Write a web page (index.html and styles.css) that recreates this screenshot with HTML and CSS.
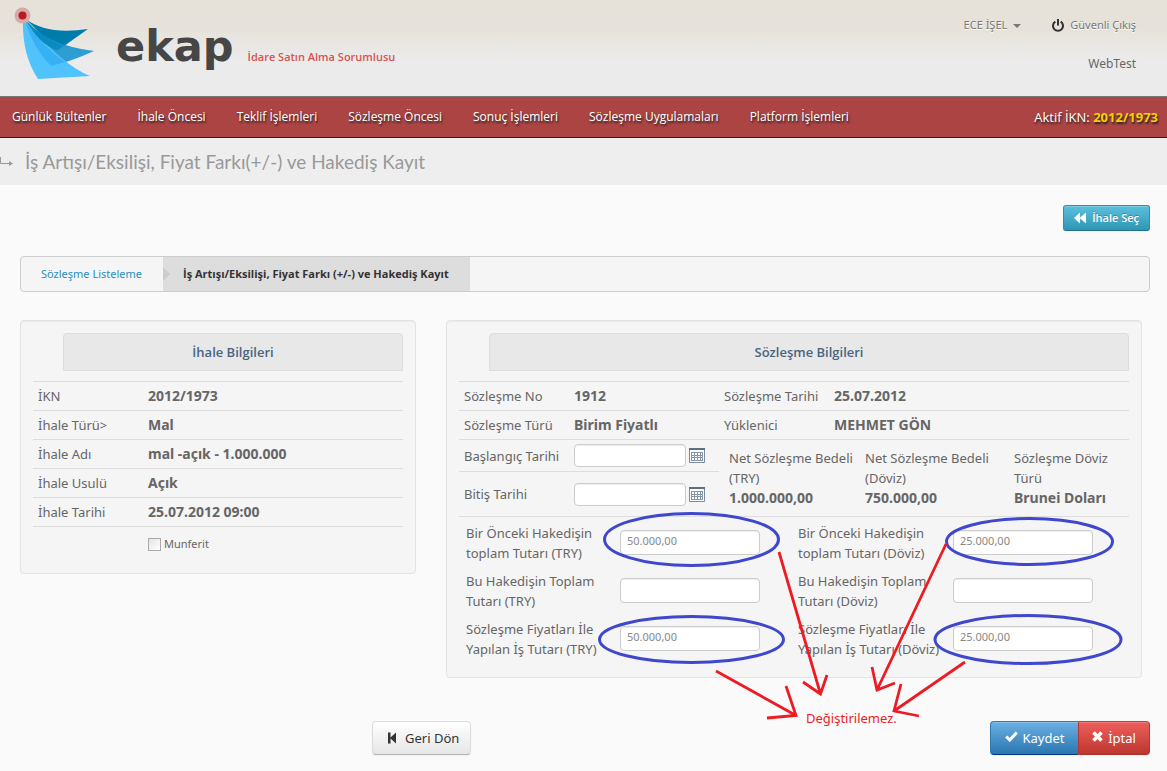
FILE: index.html
```html
<!DOCTYPE html>
<html lang="tr">
<head>
<meta charset="utf-8">
<meta name="viewport" content="width=device-width, initial-scale=1">
<title>EKAP - Hakediş Kayıt</title>
<link rel="stylesheet" href="styles.css">
</head>
<body>
<header class="header">
  <div class="brand">
    <svg class="brand-mark" width="84" height="76" viewBox="12 6 84 76" aria-hidden="true">
      <path d="M26 19Q46 35 88 29L57 51Z" fill="#007caa"/>
      <path d="M25 20Q46 45 94 51Q72 61 52 66Z" fill="#1292d0" opacity=".88"/>
      <path d="M23 20Q22 55 38 79L90 76Q62 65 26 21Z" fill="#50c2fc"/>
      <path d="M25 21Q33 48 51 66L65 62Q43 47 25 21Z" fill="#35b1f4"/>
      <path d="M26 20Q38 43 56 50L62 46Q41 37 26 20Z" fill="#098bc1"/>
      <circle cx="22.500" cy="15.500" r="8" fill="#d9a8a8"/>
      <circle cx="22.500" cy="15.500" r="4" fill="#b81c22"/>
    </svg>
    <span class="brand-name">ekap</span>
    <span class="brand-role">İdare Satın Alma Sorumlusu</span>
  </div>
  <div class="account">
    <div class="account-links">
      <a href="#" class="account-user">ECE İŞEL<span class="caret"></span></a>
      <a href="#" class="account-exit">
        <svg width="12" height="13" viewBox="0 0 12 13" aria-hidden="true"><path d="M3.300 2.600A5 5 0 1 0 8.700 2.600" fill="none" stroke="#333" stroke-width="2"/><path d="M6 0V6.500" stroke="#333" stroke-width="2"/></svg>
        Güvenli Çıkış</a>
    </div>
    <span class="account-env">WebTest</span>
  </div>
</header>
<nav class="nav">
  <ul class="nav-list">
    <li><a href="#">Günlük Bültenler</a></li>
    <li><a href="#">İhale Öncesi</a></li>
    <li><a href="#">Teklif İşlemleri</a></li>
    <li><a href="#">Sözleşme Öncesi</a></li>
    <li><a href="#">Sonuç İşlemleri</a></li>
    <li><a href="#">Sözleşme Uygulamaları</a></li>
    <li><a href="#">Platform İşlemleri</a></li>
  </ul>
  <p class="nav-ikn">Aktif İKN: <strong>2012/1973</strong></p>
</nav>
<div class="page-title">
  <svg width="14" height="10" viewBox="0 0 14 10" aria-hidden="true"><path d="M0.500 0V6.500H11" fill="none" stroke="#999"/><path d="M9 4L13 6.500L9 9Z" fill="#999"/></svg>
  <h1>İş Artışı/Eksilişi, Fiyat Farkı(+/-) ve Hakediş Kayıt</h1>
</div>
<main class="main">
  <div class="toolbar">
    <button type="button" class="btn btn-info">
      <svg width="12" height="12" viewBox="0 0 12 12" aria-hidden="true"><path d="M6 0.500V11.500L0 6ZM12 0.500V11.500L5.500 6Z" fill="#fff"/></svg>
      İhale Seç</button>
  </div>
  <ol class="steps">
    <li><a href="#">Sözleşme Listeleme</a></li>
    <li class="current">İş Artışı/Eksilişi, Fiyat Farkı (+/-) ve Hakediş Kayıt</li>
  </ol>
  <form>
    <div class="panels">
      <section class="panel">
        <h2 class="panel-title">İhale Bilgileri</h2>
        <table class="facts">
          <tr><th scope="row">İKN</th><td>2012/1973</td></tr>
          <tr><th scope="row">İhale Türü&gt;</th><td>Mal</td></tr>
          <tr><th scope="row">İhale Adı</th><td>mal -açık - 1.000.000</td></tr>
          <tr><th scope="row">İhale Usulü</th><td>Açık</td></tr>
          <tr><th scope="row">İhale Tarihi</th><td>25.07.2012 09:00</td></tr>
        </table>
        <label class="check"><input type="checkbox"> Munferit</label>
      </section>
      <section class="panel panel-contract">
        <h2 class="panel-title">Sözleşme Bilgileri</h2>
        <table class="facts facts-wide">
          <tr><th scope="row">Sözleşme No</th><td class="mid">1912</td><th scope="row">Sözleşme Tarihi</th><td>25.07.2012</td></tr>
          <tr><th scope="row">Sözleşme Türü</th><td class="mid">Birim Fiyatlı</td><th scope="row">Yüklenici</th><td>MEHMET GÖN</td></tr>
        </table>
        <div class="period">
          <div class="dates">
            <div class="date-row">
              <label for="start">Başlangıç Tarihi</label>
              <input type="text" id="start">
              <button type="button" class="cal" aria-label="Başlangıç tarihi seç"><svg width="16" height="15" viewBox="0 0 16 15"><path d="M.5.500H15.500V14.500H.5Z" fill="#fff" stroke="#7b8b99"/><path d="M0 0H16V2H0Z" fill="#5c7084"/><path d="M2 4H14V13H2Z" fill="#8496a8"/><path d="M3 5h2v2H3zM6 5h2v2H6zM9 5h2v2H9zM12 5h1v2h-1zM3 8h2v1H3zM6 8h2v1H6zM9 8h2v1H9zM12 8h1v1h-1zM3 10h2v2H3zM6 10h2v2H6zM9 10h2v2H9zM12 10h1v2h-1z" fill="#fff"/></svg></button>
            </div>
            <div class="date-row">
              <label for="end">Bitiş Tarihi</label>
              <input type="text" id="end">
              <button type="button" class="cal" aria-label="Bitiş tarihi seç"><svg width="16" height="15" viewBox="0 0 16 15"><path d="M.5.500H15.500V14.500H.5Z" fill="#fff" stroke="#7b8b99"/><path d="M0 0H16V2H0Z" fill="#5c7084"/><path d="M2 4H14V13H2Z" fill="#8496a8"/><path d="M3 5h2v2H3zM6 5h2v2H6zM9 5h2v2H9zM12 5h1v2h-1zM3 8h2v1H3zM6 8h2v1H6zM9 8h2v1H9zM12 8h1v1h-1zM3 10h2v2H3zM6 10h2v2H6zM9 10h2v2H9zM12 10h1v2h-1z" fill="#fff"/></svg></button>
            </div>
          </div>
          <dl class="prices">
            <div><dt>Net Sözleşme Bedeli<br>(TRY)</dt><dd>1.000.000,00</dd></div>
            <div><dt>Net Sözleşme Bedeli<br>(Döviz)</dt><dd>750.000,00</dd></div>
            <div><dt>Sözleşme Döviz<br>Türü</dt><dd>Brunei Doları</dd></div>
          </dl>
        </div>
        <div class="amounts">
          <label for="a1">Bir Önceki Hakedişin<br>toplam Tutarı (TRY)</label><input type="text" id="a1" value="50.000,00" readonly>
          <label for="b1">Bir Önceki Hakedişin<br>toplam Tutarı (Döviz)</label><input type="text" id="b1" value="25.000,00" readonly>
          <label for="a2">Bu Hakedişin Toplam<br>Tutarı (TRY)</label><input type="text" id="a2">
          <label for="b2">Bu Hakedişin Toplam<br>Tutarı (Döviz)</label><input type="text" id="b2">
          <label for="a3">Sözleşme Fiyatları İle<br>Yapılan İş Tutarı (TRY)</label><input type="text" id="a3" value="50.000,00" readonly>
          <label for="b3">Sözleşme Fiyatları İle<br>Yapılan İş Tutarı (Döviz)</label><input type="text" id="b3" value="25.000,00" readonly>
        </div>
        <svg class="notes" width="696" height="410" viewBox="446 320 696 410">
          <g fill="none" stroke="#3f48cc" stroke-width="3">
            <ellipse cx="691.500" cy="539.500" rx="87" ry="26"/>
            <ellipse cx="691.500" cy="639.500" rx="92" ry="23"/>
            <ellipse cx="1029.500" cy="541.500" rx="83" ry="23"/>
            <ellipse cx="1028" cy="639.500" rx="93" ry="24"/>
          </g>
          <g fill="none" stroke="#ed1c24" stroke-width="2.800">
            <path d="M779 552L820.500 694M803 682L820.500 694L827 675"/>
            <path d="M946 544L877 690M872 667L877 690L895 683"/>
            <path d="M716 671L796 715.500M786 686L796 715.500L767 718"/>
            <path d="M965 662L894 711M901 684L894 711L919 716"/>
          </g>
          <text class="notes-text" x="806" y="723">Değiştirilemez.</text>
        </svg>
      </section>
    </div>
    <div class="actions">
      <button type="button" class="btn btn-back">
        <svg width="9" height="12" viewBox="0 0 9 12" aria-hidden="true"><path d="M0 0.500H2.500V5.500L8 0.500V11.500L2.500 6.500V11.500H0Z" fill="#333"/></svg>
        Geri Dön</button>
      <div class="btn-group">
        <button type="submit" class="btn btn-save">
          <svg width="13" height="11" viewBox="0 0 13 11" aria-hidden="true"><path d="M1.200 5.500L4.800 9L11.800 1.500" fill="none" stroke="#fff" stroke-width="3"/></svg>
          Kaydet</button>
        <button type="button" class="btn btn-cancel">
          <svg width="11" height="11" viewBox="0 0 11 11" aria-hidden="true"><path d="M1.500 1.500L9.500 9.500M9.500 1.500L1.500 9.500" stroke="#fff" stroke-width="3.600"/></svg>
          İptal</button>
      </div>
    </div>
  </form>
</main>
</body>
</html>
```
FILE: styles.css
```css
* { box-sizing: border-box; }
body {
  margin: 0;
  background: #fafafa;
  color: #666;
  font: 13px/20px "Noto Sans", "Open Sans", sans-serif;
}
h1, h2, p, ul, ol, dl, dd { margin: 0; padding: 0; }
ul, ol { list-style: none; }
a { color: inherit; text-decoration: none; }
input, button { font: inherit; color: inherit; }

.header {
  display: flex;
  justify-content: space-between;
  height: 96px;
  background: linear-gradient(#e6e1d9 0, #e6e1d9 26px, #ebebeb 60px);
}
.brand { display: flex; align-items: flex-start; padding: 6px 0 0 12px; }
.brand-name {
  margin-left: 20px;
  color: #464646;
  font: bold 43px/80px "DejaVu Sans", sans-serif;
}
.brand-role {
  margin: 41px 0 0 14px;
  color: #d9534f;
  font-family: "Open Sans", sans-serif;
  font-size: 11px;
  font-weight: 600;
}
.account {
  display: flex;
  flex-direction: column;
  align-items: flex-end;
  gap: 19px;
  padding: 15px 31px 0 0;
  font-size: 12px;
}
.account-links { display: flex; gap: 31px; color: #777; font-size: 11px; text-shadow: 0 1px 0 #fff; }
.account-exit { display: flex; align-items: center; gap: 6px; }
.caret {
  display: inline-block;
  margin-left: 6px;
  border: 4px solid transparent;
  border-top-color: #777;
  border-bottom: 0;
  vertical-align: middle;
}

.nav {
  display: flex;
  justify-content: space-between;
  align-items: center;
  height: 42px;
  padding: 0 9px 0 12px;
  border-top: 1px solid #777;
  border-bottom: 1px solid #222;
  background: #ac4444;
  color: #fff;
  font-family: "Open Sans", sans-serif;
  text-shadow: 1px 2px 2px #222;
  white-space: nowrap;
}
.nav-list { display: flex; gap: 31px; font-size: 12px; }
.nav-ikn strong { color: #f5d000; }

.page-title {
  display: flex;
  align-items: center;
  gap: 11px;
  height: 47px;
  background: #eee;
  color: #999;
}
.page-title h1 { font: 19px/30px Lato, "Noto Sans", sans-serif; }

.main { padding: 20px 17px 16px 20px; }
.toolbar { display: flex; justify-content: flex-end; }
.btn {
  display: inline-flex;
  align-items: center;
  justify-content: center;
  gap: 8px;
  border: 1px solid;
  border-radius: 4px;
  cursor: pointer;
  box-shadow: inset 0 1px 0 rgba(255, 255, 255, .2), 0 1px 2px rgba(0, 0, 0, .05);
}
.btn-info {
  gap: 6px;
  height: 26px;
  padding: 0 10px;
  border-color: #2f8fae #2f8fae #24708a;
  border-radius: 3px;
  background: linear-gradient(#5bc0de, #2f96b4);
  color: #fff;
  font-family: "Open Sans", sans-serif;
  font-size: 11px;
  font-weight: 600;
  text-shadow: 0 -1px 0 rgba(0, 0, 0, .25);
}

.steps {
  display: flex;
  height: 36px;
  margin-top: 25px;
  overflow: hidden;
  border: 1px solid #ccc;
  border-radius: 4px;
  background: #f5f5f5;
  font-size: 11px;
  line-height: 34px;
}
.steps li { padding: 0 21px 0 20px; }
.steps a { color: #2a8fbd; }
.steps .current {
  position: relative;
  background: #ddd;
  color: #333;
  font-family: "Open Sans", sans-serif;
  font-weight: 700;
}
.steps .current::before {
  content: "";
  position: absolute;
  left: 0;
  top: 10px;
  border: 7px solid transparent;
  border-left-color: #ccc;
  border-right: 0;
}

.panels {
  display: grid;
  grid-template-columns: 33fr 58fr;
  gap: 30px;
  align-items: start;
  margin: 28px 8px 0 0;
}
.panel {
  position: relative;
  padding: 12px;
  border: 1px solid #e3e3e3;
  border-radius: 4px;
  background: #f5f5f5;
  box-shadow: inset 0 1px 1px rgba(0, 0, 0, .05);
}
.panel-contract { padding-bottom: 18px; }
.panel-title {
  margin: 0 0 10px 30px;
  border: 1px solid #ddd;
  border-radius: 4px 4px 0 0;
  background: #e8e8e8;
  color: #48657f;
  font: 600 13px/36px "Open Sans", sans-serif;
  text-align: center;
}
.facts { width: 100%; border-collapse: collapse; border-bottom: 1px solid #ddd; }
.facts th, .facts td {
  height: 29px;
  padding: 4px 5px;
  border-top: 1px solid #ddd;
  text-align: left;
  white-space: nowrap;
}
.facts th { width: 110px; font-weight: 400; }
.facts td { font-size: 14px; font-weight: 700; }
.facts .mid { width: 150px; }
.check {
  display: flex;
  align-items: center;
  gap: 3px;
  margin: 7px 0 7px 115px;
  font-size: 11px;
}
.check input {
  width: 13px;
  height: 13px;
  margin: 0;
  appearance: none;
  border: 1px solid #aaa;
  background: linear-gradient(135deg, #e4e4e4, #fff);
}
.check input:checked { background: #48657f; }

input[type="text"] {
  border: 1px solid #ccc;
  border-radius: 4px;
  background: #fff;
  box-shadow: inset 0 1px 1px rgba(0, 0, 0, .07);
}
.period { display: flex; border-bottom: 1px solid #ddd; }
.dates { width: 260px; }
.date-row { display: flex; align-items: center; height: 44px; padding: 0 5px; }
.date-row:first-child { height: 32px; border-bottom: 1px solid #ddd; }
.date-row label { width: 110px; }
.date-row input { width: 112px; height: 23px; padding: 0 6px; }
.cal { display: flex; margin-left: 3px; padding: 0; border: 0; background: none; }
.prices { display: flex; flex: 1; padding: 8px 0 0 10px; white-space: nowrap; }
.prices div { width: 136px; }
.prices div:nth-child(2) { width: 149px; }
.prices div:last-child { width: 110px; }
.prices dd { font-size: 14px; font-weight: 700; }
.amounts {
  display: grid;
  grid-template-columns: 154px 178px 155px 140px;
  row-gap: 8px;
  padding: 6px 0 0 7px;
  white-space: nowrap;
}
.amounts input {
  width: 140px;
  height: 25px;
  margin-top: 7px;
  padding: 0 6px 5px;
  color: #888;
  font-size: 11px;
}
.notes { position: absolute; left: -1px; top: -1px; pointer-events: none; }
.notes-text { fill: #ed1c24; }

.actions {
  display: flex;
  justify-content: space-between;
  margin-top: 43px;
  padding-left: 352px;
}
.btn-back {
  height: 34px;
  padding: 0 11px 0 15px;
  border-color: #ddd #ddd #b3b3b3;
  background: linear-gradient(#fff, #e6e6e6);
  color: #333;
}
.btn-group { display: flex; color: #fff; text-shadow: 0 -1px 0 rgba(0, 0, 0, .25); }
.btn-group .btn { gap: 5px; height: 34px; }
.btn-group svg { margin-bottom: 3px; }
.btn-save {
  width: 88px;
  border-color: #2a7ab5 #2a7ab5 #003580;
  border-right: 0;
  border-radius: 4px 0 0 4px;
  background: linear-gradient(#6bb0e4, #2a77b0);
}
.btn-cancel {
  width: 72px;
  border-color: #c43c35 #b53530 #a3322c;
  border-radius: 0 4px 4px 0;
  background: linear-gradient(#ee5f5b, #bd362f);
}
```
